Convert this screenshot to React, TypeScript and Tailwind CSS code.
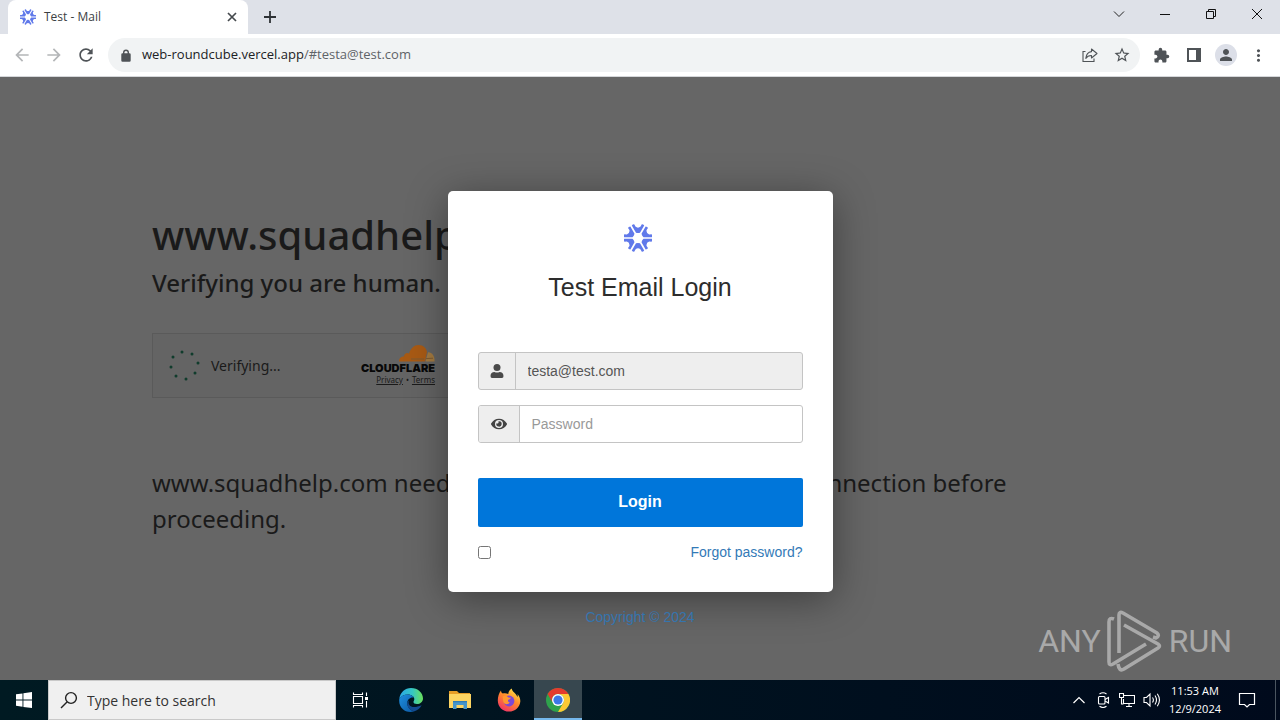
import React from 'react';
import {
  MdArrowBack,
  MdArrowForward,
  MdExtension,
  MdMoreVert,
  MdPerson,
  MdRefresh,
  MdStarBorder,
} from 'react-icons/md';
import { FaEye } from 'react-icons/fa';

const LOGO_ANGLES = [0, 60, 120, 180, 240, 300];

const BrandLogo: React.FC<{ className: string }> = ({ className }) => (
  <svg viewBox="-14 -14 28 28" className={className} fill="#6079ea">
    {LOGO_ANGLES.map((angle) => (
      <path
        key={angle}
        transform={`rotate(${angle + 30}) rotate(-30)`}
        d="M-6.2 -12.4 L-2 -5.2 Q0 -4.6 2 -5.2 L6.2 -12.4 Q5 -14 3.6 -13.6 L2.6 -11.4 Q0 -9.2 -2.6 -11.4 L-3.6 -13.6 Q-5 -14 -6.2 -12.4 Z"
      />
    ))}
  </svg>
);

const TabStrip: React.FC = () => (
  <header className="flex h-[34px] items-stretch bg-[#dee1e8]">
    <div className="ml-2 flex w-[240px] items-center rounded-t-lg bg-white pl-3 pr-[10px]">
      <BrandLogo className="h-4 w-4" />
      <span className="ml-2 flex-1 text-[12px] text-[#3c4043]">Test - Mail</span>
      <button aria-label="Close tab" className="flex h-3 w-3 items-center justify-center">
        <svg viewBox="0 0 12 12" className="h-3 w-3" stroke="#45494d" strokeWidth="1.7">
          <path d="M2 2 L10 10 M10 2 L2 10" />
        </svg>
      </button>
    </div>
    <button aria-label="New tab" className="ml-4 flex items-center">
      <svg viewBox="0 0 12 12" className="h-3 w-3" stroke="#2e3236" strokeWidth="1.8">
        <path d="M6 0 V12 M0 6 H12" />
      </svg>
    </button>
    <div className="ml-auto flex pb-[6px]">
      <button aria-label="Search tabs" className="flex w-[46px] items-center justify-center">
        <svg viewBox="0 0 12 12" className="h-3 w-3" fill="none" stroke="#222">
          <path d="M1 3.5 L6 8.5 L11 3.5" />
        </svg>
      </button>
      <button aria-label="Minimize" className="flex w-[46px] items-center justify-center">
        <svg viewBox="0 0 10 10" className="h-[10px] w-[10px]" stroke="#111">
          <path d="M0 5.5 H10" />
        </svg>
      </button>
      <button aria-label="Restore" className="flex w-[46px] items-center justify-center">
        <svg viewBox="0 0 10 10" className="h-[10px] w-[10px]" fill="none" stroke="#111">
          <path d="M0.5 2.5 H7.5 V9.5 H0.5 Z M2.5 2.5 V0.5 H9.5 V7.5 H7.5" />
        </svg>
      </button>
      <button aria-label="Close" className="flex w-[46px] items-center justify-center">
        <svg viewBox="0 0 10 10" className="h-[10px] w-[10px]" stroke="#111">
          <path d="M0 0 L10 10 M10 0 L0 10" />
        </svg>
      </button>
    </div>
  </header>
);

const Toolbar: React.FC = () => (
  <nav className="flex h-[43px] items-center border-b border-[#d5d7da] bg-white pr-3 text-[#4f5357]">
    <div className="flex w-[108px] items-center gap-3 pl-3">
      <button aria-label="Back"><MdArrowBack className="h-5 w-5 text-[#b4b6b8]" /></button>
      <button aria-label="Forward"><MdArrowForward className="h-5 w-5 text-[#b4b6b8]" /></button>
      <button aria-label="Reload"><MdRefresh className="h-5 w-5" /></button>
    </div>
    <div className="flex h-[34px] flex-1 items-center rounded-full bg-[#f1f3f4] pl-3 pr-[9px]">
      <svg viewBox="0 0 12 13" className="h-[13px] w-3" fill="none" stroke="currentColor" strokeWidth="1.4">
        <rect x="2" y="5" width="8" height="7" fill="currentColor" rx="0.5" />
        <path d="M3.7 5 V3.4 Q3.7 1.2 6 1.2 Q8.3 1.2 8.3 3.4 V5" />
      </svg>
      <p className="ml-[10px] flex-1 text-[13px] text-[#5f6368]">
        <span className="text-[#202124]">web-roundcube.vercel.app</span>/#testa@test.com
      </p>
      <button aria-label="Share">
        <svg viewBox="0 0 16 16" className="h-4 w-4" fill="none" stroke="currentColor" strokeWidth="1.1">
          <path d="M3.5 4.5 H1 V14.5 H12 V11.5" />
          <path d="M9.5 2 L15 6.5 L9.5 11 V8.5 C6.5 8.4 5 9.5 3.8 11.4 C4.2 7.5 6 5 9.5 4.6 Z" strokeLinejoin="round" />
        </svg>
      </button>
      <button aria-label="Bookmark" className="ml-[15px]"><MdStarBorder className="h-[18px] w-[18px]" /></button>
    </div>
    <div className="ml-[13px] flex items-center">
      <button aria-label="Extensions" className="w-5"><MdExtension className="h-[17px] w-[17px]" /></button>
      <button aria-label="Side panel" className="ml-[13px]">
        <svg viewBox="0 0 16 16" className="h-4 w-4">
          <path d="M1 1 H15 V15 H1 Z M3 3 V13 H10 V3 Z" fill="currentColor" fillRule="evenodd" />
        </svg>
      </button>
      <button
        aria-label="Profile"
        className="ml-[13px] flex h-[22px] w-[22px] items-center justify-center rounded-full bg-[#dcdfe8]"
      >
        <MdPerson className="h-[18px] w-[18px]" />
      </button>
      <button aria-label="Menu" className="ml-3"><MdMoreVert className="h-[19px] w-[19px]" /></button>
    </div>
  </nav>
);

const SPINNER_DOTS = [
  [13, 2], [23, 4], [29, 13], [26, 23], [17, 29], [7, 26], [2, 17], [4, 7],
];

const VerificationPage: React.FC = () => (
  <div className="pr-4 font-['Noto_Sans',sans-serif] text-[#1a1a1a]">
    <div className="mx-auto max-w-[960px] pt-32">
      <h1 className="text-[40px] font-medium leading-[60px]">www.squadhelp.com</h1>
      <h2 className="text-[24px] font-medium leading-9">Verifying you are human.</h2>
      <div className="mt-8 flex h-[65px] w-[300px] items-center border border-[#5a5a5a] bg-[#646464] pl-4 pr-4">
        <svg viewBox="0 0 31 31" className="h-[31px] w-[31px]" fill="#103c2c">
          {SPINNER_DOTS.map(([x, y]) => (
            <circle key={`${x}-${y}`} cx={x} cy={y} r="1.5" />
          ))}
        </svg>
        <span className="ml-[11px] text-[14px]">Verifying...</span>
        <div className="ml-auto flex flex-col items-end">
          <svg viewBox="0 0 36 17" className="h-[17px] w-9">
            <path
              d="M0 16.5 C0 13 2 11.4 5 11.4 C5 8.4 8 7 10 8.5 C12 3 15 0 19.5 0 C24.5 0 27.6 3.5 28 7 L26 16.5 Z"
              fill="#a85a14"
            />
            <path d="M26.5 16.5 L29 7.2 C33 7 36 11 35.5 16.5 Z" fill="#a37a40" />
            <path d="M12 14 H25 M27 13.6 L34 13.2" stroke="#7d5a30" strokeWidth="1" />
          </svg>
          <span className="font-['Inter',sans-serif] text-[11px] font-black leading-3 text-[#080808]">CLOUDFLARE</span>
          <span className="text-[8px] leading-3">
            <a href="#privacy" className="underline">Privacy</a>
            <span className="mx-[3px]">•</span>
            <a href="#terms" className="underline">Terms</a>
          </span>
        </div>
      </div>
      <p className="mt-[67px] text-[24px] leading-9">
        www.squadhelp.com needs to review the security of your connection before proceeding.
      </p>
    </div>
  </div>
);

const LoginDialog: React.FC = () => (
  <div className="absolute inset-0 flex flex-col items-center pt-[114px] font-['Liberation_Sans',Arial,sans-serif] text-[14px]">
    <form
      onSubmit={(e) => e.preventDefault()}
      className="flex w-[385px] flex-col rounded-[5px] bg-white px-[30px] pb-[30px] pt-[33px] shadow-[0_7px_40px_rgba(0,0,0,0.4)]"
    >
      <BrandLogo className="mr-1 h-7 w-7 self-center" />
      <h3 className="mt-5 text-center text-[25px] leading-[30px] text-[#2d2d2d]">Test Email Login</h3>

      <div className="mt-[50px] flex h-[38px] overflow-hidden rounded-[3px] border border-[#c4c4c4] bg-[#eee]">
        <label htmlFor="email" aria-label="Email" className="flex w-[37px] items-center justify-center border-r border-[#c4c4c4]">
          <svg viewBox="0 0 14 14" className="h-[14px] w-[14px]" fill="#4a4a4a">
            <circle cx="7" cy="3.5" r="3.5" />
            <path d="M0.5 12 C0.5 9.2 2.2 8 4.4 8 Q7 9 9.6 8 C11.8 8 13.5 9.2 13.5 12 Q13.5 14 12 14 H2 Q0.5 14 0.5 12 Z" />
          </svg>
        </label>
        <input
          id="email"
          type="email"
          readOnly
          defaultValue="testa@test.com"
          className="min-w-0 flex-1 bg-transparent px-3 text-[#555] outline-none"
        />
      </div>

      <div className="mt-[15px] flex h-[38px] overflow-hidden rounded-[3px] border border-[#c4c4c4]">
        <label
          htmlFor="password"
          aria-label="Password"
          className="flex w-[41px] items-center justify-center border-r border-[#c4c4c4] bg-[#eee]"
        >
          <FaEye className="h-4 w-4 text-[#444]" />
        </label>
        <input
          id="password"
          type="password"
          placeholder="Password"
          className="min-w-0 flex-1 px-3 text-[#555] outline-none placeholder:text-[#999]"
        />
      </div>

      <button type="submit" className="mt-[35px] h-[49px] rounded-[2px] bg-[#0076da] pb-[2px] text-[16px] font-bold text-white">
        Login
      </button>

      <div className="mt-[15px] flex h-5 items-center justify-between">
        <input type="checkbox" aria-label="Remember me" className="h-[13px] w-[13px]" />
        <a href="#forgot" className="text-[#337ab7]">Forgot password?</a>
      </div>
    </form>
    <a href="#copyright" className="mt-[15px] leading-5 text-[#3574ad]">Copyright © 2024</a>
  </div>
);

const Watermark: React.FC = () => (
  <div className="absolute bottom-2 right-12 flex items-center font-['Roboto',sans-serif] text-[32px] leading-[62px] text-[#a9a9a9]">
    <span>ANY</span>
    <svg viewBox="0 0 56 62" className="mx-[6px] h-[62px] w-14" fill="none" stroke="#a9a9a9" strokeWidth="3.6" strokeLinejoin="round">
      <path d="M7 9 Q2 7 2 12 V52 Q2 56 6 54 L39 34" />
      <path d="M12 43 V5 Q12 1 16 3 L50 23 Q53 26 49 28 L46 27" />
      <path d="M17 15 L51 34 Q54 36 51 38 L17 59 Q12 62 11 54" />
    </svg>
    <span>RUN</span>
  </div>
);

const EdgeIcon: React.FC = () => (
  <svg viewBox="0 0 24 24" className="h-6 w-6">
    <defs>
      <linearGradient id="edgeTop" x1="0" y1="0.4" x2="1" y2="0.4">
        <stop offset="0" stopColor="#2aa8e8" />
        <stop offset="0.55" stopColor="#35c6c4" />
        <stop offset="1" stopColor="#6be05a" />
      </linearGradient>
      <linearGradient id="edgeBody" x1="0" y1="0" x2="1" y2="1">
        <stop offset="0" stopColor="#1e8fe0" />
        <stop offset="1" stopColor="#0c59a4" />
      </linearGradient>
    </defs>
    <path d="M0.3 11 C1 4.5 6 0 12 0 C19 0 24 5 24 10.5 C24 14 21 16 18 16 C15.5 16 14.5 15 14.5 14 C14.5 13 15.3 12.8 15.3 11 C15.3 8.6 12.5 6.4 9 6.4 C5 6.4 1.7 8.5 0.3 11 Z" fill="url(#edgeTop)" />
    <path d="M0.3 11 C1.7 8 5 6.4 9 6.4 C12 6.4 14 8 14.8 9.7 C12 8.6 8.3 11 8.3 15 C8.3 19.5 12 23 15.5 23.3 C7 26 -0.8 20 0.3 11 Z" fill="url(#edgeBody)" />
    <path d="M10 12.2 C8 17.5 13 21.6 22.6 17.3 C21.2 20.2 18.7 22.4 15.5 23.3 C11.6 23 8.3 19.5 8.3 15.8 C8.3 14.2 9 13 10 12.2 Z" fill="#134b91" />
  </svg>
);

const FolderIcon: React.FC = () => (
  <svg viewBox="0 0 24 24" className="h-6 w-6">
    <path d="M1 3 H9 L11 5 H22 V9 H1 Z" fill="#e69d27" />
    <path d="M1 6 H23 V20 H1 Z" fill="#fcd462" />
    <path d="M5 13 H19 V21 H15.5 V17 H8.5 V21 H5 Z" fill="#4595ca" />
    <path d="M5 13 H19 V14.3 H5 Z" fill="#2f7cb5" />
  </svg>
);

const FirefoxIcon: React.FC = () => (
  <svg viewBox="0 0 24 24" className="h-6 w-6">
    <defs>
      <linearGradient id="foxBody" x1="0.8" y1="0" x2="0.2" y2="1">
        <stop offset="0" stopColor="#ffe84a" />
        <stop offset="0.45" stopColor="#ff8a2a" />
        <stop offset="1" stopColor="#f02c6b" />
      </linearGradient>
    </defs>
    <path d="M4 2.5 C4 4.2 4.7 5 5.8 5.5 C8 4.8 9.5 5.3 11.3 6 C11.5 3.5 12.7 1.4 14.8 0.5 C15 4 19.2 5 20.4 9 C20.9 8 20.8 7 20.4 5.9 C22.3 7.8 23.5 10.7 23.3 13.5 C22.8 19.4 18 23.6 12 23.6 C5.6 23.6 0.8 18.7 0.8 12.4 C0.8 8.7 2 5 4 2.5 Z" fill="url(#foxBody)" />
    <circle cx="12" cy="13" r="5.4" fill="#7b48d6" />
    <path d="M5.6 8.5 C8 7.2 10 8 11.4 9.4 L14 9.7 C13.7 11 11.4 11.3 11 12.4 C10.7 14 12 14.6 13 14.6 C11 17 7.3 17 6.2 13.5 Z" fill="#ff982f" />
  </svg>
);

const ChromeIcon: React.FC = () => (
  <svg viewBox="0 0 24 24" className="h-6 w-6">
    <circle cx="12" cy="12" r="12" fill="#2fa24c" />
    <path d="M1.6 6 A12 12 0 0 1 22.4 6 H12 A6 6 0 0 0 6.8 15 Z" fill="#e33b2e" />
    <path d="M22.4 6 A12 12 0 0 1 12 24 L17.2 15 A6 6 0 0 0 12 6 Z" fill="#fcc934" />
    <circle cx="12" cy="12" r="6" fill="#fff" />
    <circle cx="12" cy="12" r="4.6" fill="#3b78e7" />
  </svg>
);

const Taskbar: React.FC = () => (
  <footer className="flex h-10 items-stretch bg-linear-to-r from-[#001a22] to-[#000a1c] text-white">
    <button aria-label="Start" className="flex w-12 items-center justify-center">
      <svg viewBox="0 0 16 16" className="h-4 w-4" fill="#fff">
        <path d="M0 2.3 L6.5 1.4 V7.6 H0 Z M7.4 1.2 L16 0 V7.6 H7.4 Z M0 8.5 H6.5 V14.7 L0 13.8 Z M7.4 8.5 H16 V16 L7.4 14.9 Z" />
      </svg>
    </button>
    <label className="flex w-[288px] items-center border border-[#c9c9c9] bg-[#f0f0f0] pl-[11px]">
      <svg viewBox="0 0 18 18" className="h-[18px] w-[18px]" fill="none" stroke="#222" strokeWidth="1.4">
        <circle cx="11" cy="7" r="5.4" />
        <path d="M7 11 L1 17" />
      </svg>
      <input
        type="text"
        aria-label="Search"
        placeholder="Type here to search"
        className="ml-[9px] min-w-0 flex-1 bg-transparent text-[14px] outline-none placeholder:text-[#333]"
      />
    </label>
    <div className="flex gap-px">
      <button aria-label="Task view" className="mr-[2px] flex w-12 items-center justify-center">
        <svg viewBox="0 0 17 16" className="h-4 w-[17px]" fill="none" stroke="#fff" strokeWidth="1.1">
          <path d="M1.5 4.5 H10.5 V11.5 H1.5 Z M1.5 0.5 V2.5 H10.5 V0.5 M1.5 15.5 V13.5 H10.5 V15.5 M14.5 0.5 V4 M14.5 9 V15.5" />
          <path d="M13 5 H16 V8 H13 Z" fill="#fff" stroke="none" />
        </svg>
      </button>
      <button aria-label="Edge" className="flex w-12 items-center justify-center"><EdgeIcon /></button>
      <button aria-label="File Explorer" className="flex w-12 items-center justify-center"><FolderIcon /></button>
      <button aria-label="Firefox" className="flex w-12 items-center justify-center"><FirefoxIcon /></button>
      <button
        aria-label="Chrome"
        className="flex w-12 items-center justify-center border-b-2 border-[#76b9ed] bg-[#37474f] pt-[2px]"
      >
        <ChromeIcon />
      </button>
    </div>

    <div className="ml-auto flex items-center">
      <div className="flex items-center gap-2">
        <svg viewBox="0 0 16 16" className="h-4 w-4" fill="none" stroke="#fff" strokeWidth="1.2">
          <path d="M2.5 11 L8 5.5 L13.5 11" />
        </svg>
        <svg viewBox="0 0 16 16" className="h-4 w-4" fill="none" stroke="#fff" strokeWidth="1.1">
          <rect x="3.5" y="4.5" width="6.5" height="7.5" rx="1" />
          <path d="M10 7.5 L13.5 5.5 V11 L10 9 M4.5 2 Q8 -0.5 11.5 2 M4.5 14.3 Q8 16.8 11.5 14.3" />
        </svg>
        <svg viewBox="0 0 16 16" className="h-4 w-4" fill="none" stroke="#fff" strokeWidth="1.1">
          <path d="M5 3.5 H15.5 V11.5 H4.5 V7 M7 14.5 H13 M10 11.5 V14.5 M0.5 1.5 H4.5 V5.5 H0.5 Z M2.5 5.5 V12 H4.5" />
        </svg>
        <svg viewBox="0 0 18 16" className="h-4 w-[18px]" fill="none" stroke="#fff" strokeWidth="1.1">
          <path d="M1 5.5 H3.5 L7 2 V14 L3.5 10.5 H1 Z M9.5 5.5 Q11.3 8 9.5 10.5 M12 3.5 Q15 8 12 12.5 M14.3 1.8 Q18.6 8 14.3 14.2" />
        </svg>
      </div>
      <div className="ml-2 text-center text-[11px] leading-[18px]">
        <div className="whitespace-nowrap">11:53 AM</div>
        <div className="whitespace-nowrap">12/9/2024</div>
      </div>
      <button aria-label="Notifications" className="ml-[17px]">
        <svg viewBox="0 0 18 18" className="h-[18px] w-[18px]" fill="none" stroke="#fff" strokeWidth="1.2">
          <path d="M1.5 2.5 H16.5 V13.5 H11.5 L9 16 L6.5 13.5 H1.5 Z" />
        </svg>
      </button>
      <div className="ml-[19px] mr-1 h-10 w-px bg-[#4a5560]" />
    </div>
  </footer>
);

const App: React.FC = () => (
  <div className="flex min-h-screen flex-col font-['Open_Sans','Noto_Sans',sans-serif]">
    <TabStrip />
    <Toolbar />
    <main className="relative flex-1 bg-[#666]">
      <VerificationPage />
      <LoginDialog />
      <Watermark />
    </main>
    <Taskbar />
  </div>
);

export default App;
